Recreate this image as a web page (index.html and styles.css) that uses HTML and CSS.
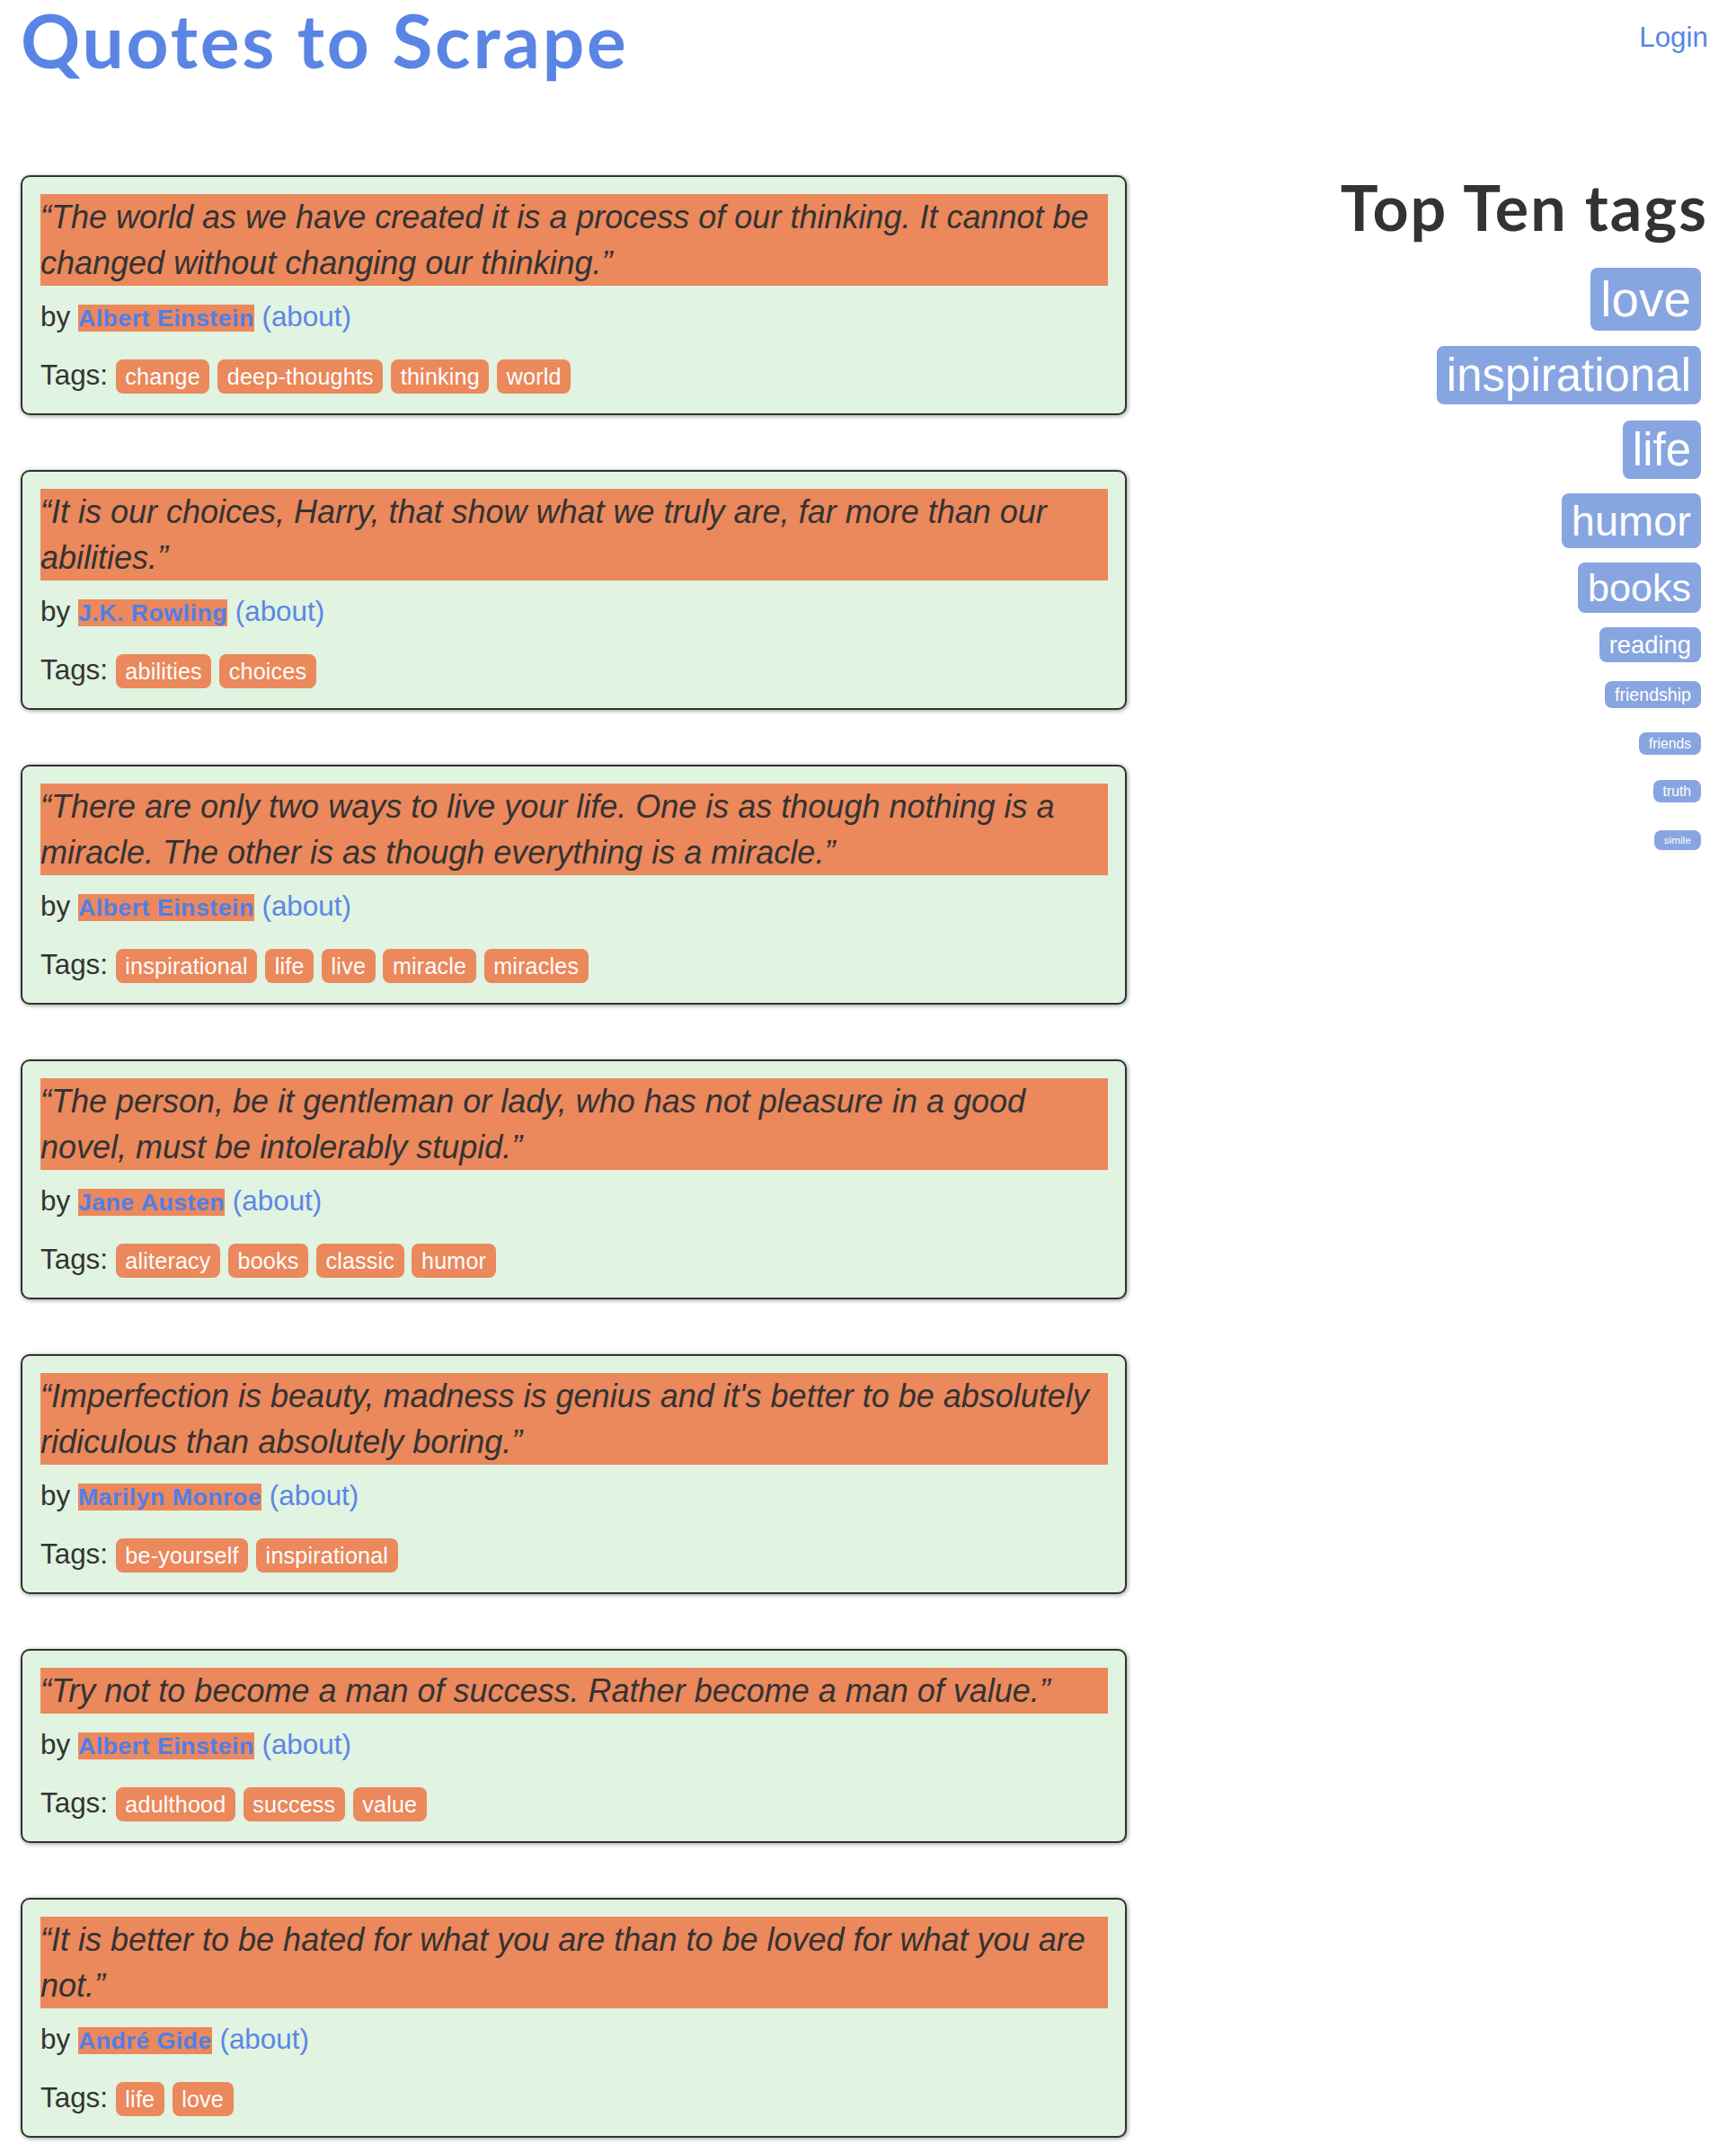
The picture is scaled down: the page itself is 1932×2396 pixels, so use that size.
FILE: index.html
```html
<!DOCTYPE html>
<html lang="en">
<head>
<meta charset="utf-8">
<title>Quotes to Scrape</title>
<link rel="stylesheet" href="styles.css">
</head>
<body>
<div class="page">
  <header class="header">
    <h1 class="title"><a class="title-link" href="#">Quotes to Scrape</a></h1>
    <a class="login" href="#">Login</a>
  </header>
  <div class="main">
    <div class="quotes">
      <div class="quote">
        <span class="text">“The world as we have created it is a process of our thinking. It cannot be changed without changing our thinking.”</span>
        <span class="byline">by <small class="author">Albert Einstein</small> <a class="about" href="#">(about)</a></span>
        <div class="tags">Tags: <a class="tag" href="#">change</a> <a class="tag" href="#">deep-thoughts</a> <a class="tag" href="#">thinking</a> <a class="tag" href="#">world</a></div>
      </div>
      <div class="quote">
        <span class="text">“It is our choices, Harry, that show what we truly are, far more than our abilities.”</span>
        <span class="byline">by <small class="author">J.K. Rowling</small> <a class="about" href="#">(about)</a></span>
        <div class="tags">Tags: <a class="tag" href="#">abilities</a> <a class="tag" href="#">choices</a></div>
      </div>
      <div class="quote">
        <span class="text">“There are only two ways to live your life. One is as though nothing is a miracle. The other is as though everything is a miracle.”</span>
        <span class="byline">by <small class="author">Albert Einstein</small> <a class="about" href="#">(about)</a></span>
        <div class="tags">Tags: <a class="tag" href="#">inspirational</a> <a class="tag" href="#">life</a> <a class="tag" href="#">live</a> <a class="tag" href="#">miracle</a> <a class="tag" href="#">miracles</a></div>
      </div>
      <div class="quote">
        <span class="text">“The person, be it gentleman or lady, who has not pleasure in a good novel, must be intolerably stupid.”</span>
        <span class="byline">by <small class="author">Jane Austen</small> <a class="about" href="#">(about)</a></span>
        <div class="tags">Tags: <a class="tag" href="#">aliteracy</a> <a class="tag" href="#">books</a> <a class="tag" href="#">classic</a> <a class="tag" href="#">humor</a></div>
      </div>
      <div class="quote">
        <span class="text">“Imperfection is beauty, madness is genius and it's better to be absolutely ridiculous than absolutely boring.”</span>
        <span class="byline">by <small class="author">Marilyn Monroe</small> <a class="about" href="#">(about)</a></span>
        <div class="tags">Tags: <a class="tag" href="#">be-yourself</a> <a class="tag" href="#">inspirational</a></div>
      </div>
      <div class="quote">
        <span class="text">“Try not to become a man of success. Rather become a man of value.”</span>
        <span class="byline">by <small class="author">Albert Einstein</small> <a class="about" href="#">(about)</a></span>
        <div class="tags">Tags: <a class="tag" href="#">adulthood</a> <a class="tag" href="#">success</a> <a class="tag" href="#">value</a></div>
      </div>
      <div class="quote">
        <span class="text">“It is better to be hated for what you are than to be loved for what you are not.”</span>
        <span class="byline">by <small class="author">André Gide</small> <a class="about" href="#">(about)</a></span>
        <div class="tags">Tags: <a class="tag" href="#">life</a> <a class="tag" href="#">love</a></div>
      </div>
    </div>
    <aside class="sidebar">
      <h2 class="side-title">Top Ten tags</h2>
      <div class="tag-list">
        <div class="tag-item"><a class="side-tag" href="#" style="font-size: 54.9px">love</a></div>
        <div class="tag-item"><a class="side-tag" href="#" style="font-size: 51.0px">inspirational</a></div>
        <div class="tag-item"><a class="side-tag" href="#" style="font-size: 51.0px">life</a></div>
        <div class="tag-item"><a class="side-tag" href="#" style="font-size: 47.0px">humor</a></div>
        <div class="tag-item"><a class="side-tag" href="#" style="font-size: 43.1px">books</a></div>
        <div class="tag-item"><a class="side-tag" href="#" style="font-size: 27.4px">reading</a></div>
        <div class="tag-item"><a class="side-tag" href="#" style="font-size: 19.6px">friendship</a></div>
        <div class="tag-item"><a class="side-tag" href="#" style="font-size: 15.7px">friends</a></div>
        <div class="tag-item"><a class="side-tag" href="#" style="font-size: 15.7px">truth</a></div>
        <div class="tag-item"><a class="side-tag" href="#" style="font-size: 11.8px">simile</a></div>
      </div>
    </aside>
  </div>
</div>
</body>
</html>
```

FILE: styles.css
```css
html, body {
  margin: 0;
  padding: 0;
  background: #ffffff;
}

body {
  font-family: "Liberation Sans", Arial, Helvetica, sans-serif;
  font-size: 31.4px;
  line-height: 1.5;
  color: #333333;
}

a {
  text-decoration: none;
}

.page {
  padding: 0 31px 0 23px;
}

.header {
  display: flex;
  justify-content: space-between;
  align-items: flex-start;
  padding-top: 3px;
}

.title {
  margin: 0;
  font-family: "Lato", "Open Sans", sans-serif;
  font-weight: 700;
  font-size: 82px;
  line-height: 82px;
  letter-spacing: 2.8px;
}

.title-link {
  color: #5a85e4;
}

.login {
  margin-top: 23px;
  font-size: 31.4px;
  line-height: 31.4px;
  color: #5a85e4;
}

.main {
  display: flex;
  align-items: flex-start;
  margin-top: 110px;
}

.quotes {
  width: 1231px;
  flex: none;
}

.quote {
  background: #e1f3e1;
  border: 2px solid #333333;
  border-radius: 10px;
  box-shadow: 1px 1px 5px rgba(0, 0, 0, 0.4);
  padding: 19px 19px 19px 20px;
  margin-bottom: 61px;
}

.text {
  display: block;
  background: #eb885c;
  font-style: italic;
  font-size: 36px;
  line-height: 51px;
  color: #333333;
}

.byline {
  display: block;
  margin-top: 11px;
  line-height: 47px;
}

.author {
  font-size: 85%;
  line-height: 1;
  font-weight: 700;
  letter-spacing: 0.5px;
  color: #507ee8;
  background: #eb885c;
}

.about {
  color: #5a87e6;
}

.tags {
  margin-top: 18px;
  line-height: 47px;
}

.tag {
  font-size: 25.1px;
  line-height: 1;
  letter-spacing: 0.2px;
  color: #ffffff;
  background: #eb885c;
  padding: 4.6px 10.6px;
  border-radius: 8px;
}

.sidebar {
  flex: 1;
  text-align: right;
}

.side-title {
  margin: 0;
  font-family: "Lato", "Open Sans", sans-serif;
  font-weight: 700;
  font-size: 70px;
  line-height: 70px;
  letter-spacing: 2px;
  color: #333333;
}

.tag-list {
  padding-top: 21px;
}

.tag-item {
  margin: 6px 8px;
}

.side-tag {
  color: #ffffff;
  background: #87a5e0;
  padding: 4px 11px;
  border-radius: 8px;
}
```
